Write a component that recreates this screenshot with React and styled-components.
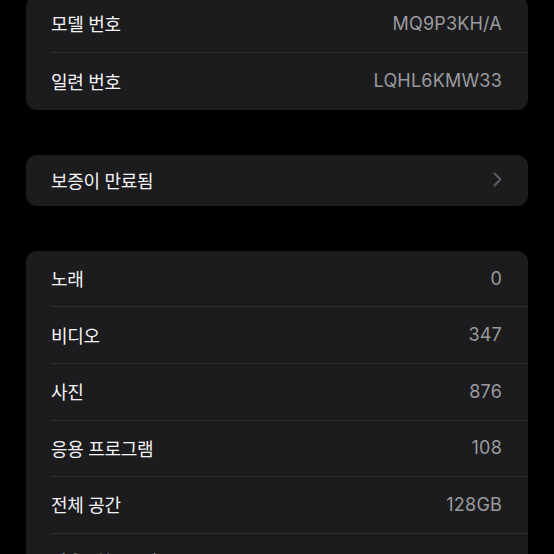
import React from "react";
import styled, { createGlobalStyle } from "styled-components";

const Global = createGlobalStyle`
  html, body {
    margin: 0;
    padding: 0;
    background: #000;
    overflow: hidden;
  }
  body {
    font-family: Inter, "Noto Sans CJK KR", sans-serif;
    -webkit-font-smoothing: antialiased;
  }
`;

const Page = styled.div`
  width: 554px;
  height: 554px;
  overflow: hidden;
  background: #000;
  padding: 0 26px;
  box-sizing: border-box;
`;

const Stack = styled.div`
  display: flex;
  flex-direction: column;
  gap: 45px;
  margin-top: -4px;
`;

const Card = styled.div`
  background: #1c1c1e;
  border-radius: 11px;
  overflow: hidden;
  display: flex;
  flex-direction: column;
`;

const Row = styled.div`
  display: flex;
  align-items: center;
  justify-content: space-between;
  height: ${(p) => p.$h || 55.6}px;
  padding-right: 26px;
  padding-bottom: 1px;
  margin-left: 25px;
  border-bottom: ${(p) => (p.$last ? "none" : "1px solid #2e2e31")};
  box-sizing: border-box;
  box-sizing: content-box;
`;

const Label = styled.span`
  color: #f4f4f6;
  font-size: 18px;
  letter-spacing: -0.3px;
`;

const Value = styled.span`
  color: #9a9a9f;
  font-size: 18px;
  letter-spacing: 0.2px;
`;

const Chevron = styled.svg`
  width: 9px;
  height: 15px;
  display: block;
`;

const rowsTop = [
  ["모델 번호", "MQ9P3KH/A"],
  ["일련 번호", "LQHL6KMW33"],
];

const rowsBottom = [
  ["노래", "0"],
  ["비디오", "347"],
  ["사진", "876"],
  ["응용 프로그램", "108"],
  ["전체 공간", "128GB"],
  ["사용 가능 공간", "61.23GB"],
];

export default function App() {
  return (
    <>
      <Global />
      <Page>
        <Stack>
          <Card>
            {rowsTop.map(([l, v], i) => (
              <Row key={l} $last={i === rowsTop.length - 1} $h={i === rowsTop.length - 1 ? 56 : 54.8}>
                <Label>{l}</Label>
                <Value>{v}</Value>
              </Row>
            ))}
          </Card>
          <Card>
            <Row $h={50} $last>
              <Label>보증이 만료됨</Label>
              <Chevron viewBox="0 0 9 15">
                <path
                  d="M1.5 1.5 L7.5 7.5 L1.5 13.5"
                  fill="none"
                  stroke="#5d5d62"
                  strokeWidth="2"
                  strokeLinecap="round"
                  strokeLinejoin="round"
                />
              </Chevron>
            </Row>
          </Card>
          <Card>
            {rowsBottom.map(([l, v], i) => (
              <Row key={l} $last={i === rowsBottom.length - 1} $h={54.6}>
                <Label>{l}</Label>
                <Value>{v}</Value>
              </Row>
            ))}
          </Card>
        </Stack>
      </Page>
    </>
  );
}
